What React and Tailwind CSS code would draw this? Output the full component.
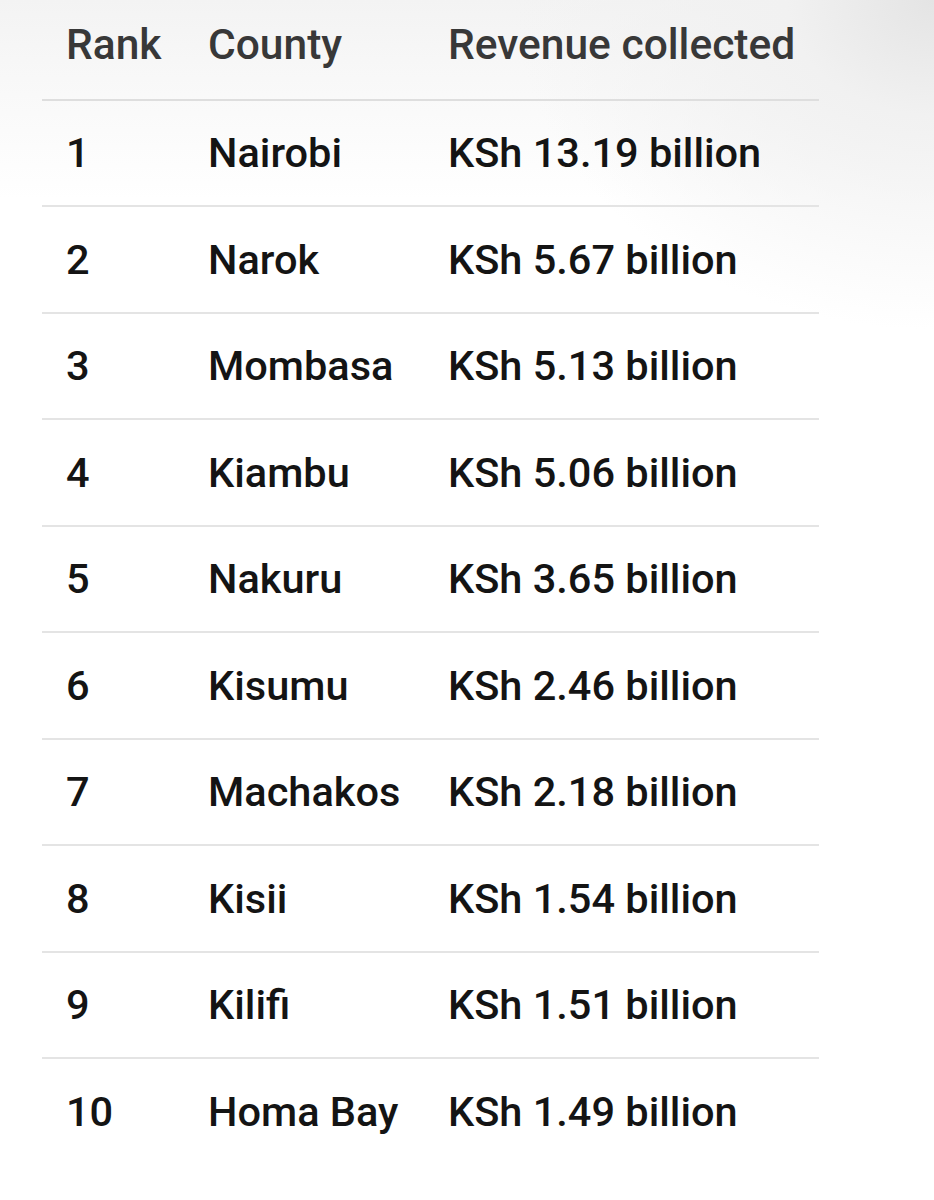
const rows = [
  ["1", "Nairobi", "KSh 13.19 billion"],
  ["2", "Narok", "KSh 5.67 billion"],
  ["3", "Mombasa", "KSh 5.13 billion"],
  ["4", "Kiambu", "KSh 5.06 billion"],
  ["5", "Nakuru", "KSh 3.65 billion"],
  ["6", "Kisumu", "KSh 2.46 billion"],
  ["7", "Machakos", "KSh 2.18 billion"],
  ["8", "Kisii", "KSh 1.54 billion"],
  ["9", "Kilifi", "KSh 1.51 billion"],
  ["10", "Homa Bay", "KSh 1.49 billion"],
];

export default function App() {
  return (
    <div
      className="w-[934px] h-[1200px] overflow-hidden bg-[radial-gradient(ellipse_420px_330px_at_100%_0%,#e4e4e4_0%,#f1f1f1_35%,rgba(255,255,255,0)_100%),linear-gradient(180deg,#f3f3f3_0px,#f7f7f7_60px,#ffffff_200px)]"
      style={{ fontFamily: "Roboto, 'Noto Sans', sans-serif" }}
    >
      <div className="ml-[42px] w-[777px]">
        <div className="flex items-center h-[101px] pb-[8px] border-b-2 border-[#dedede] text-[42.5px] font-medium text-[#383838] leading-none">
          <div className="w-[166px] pl-[24px]">Rank</div>
          <div className="w-[240px]">County</div>
          <div className="flex-1">Revenue collected</div>
        </div>
        {rows.map((r, i) => (
          <div
            key={r[0]}
            className={
              i < rows.length - 1
                ? "flex items-center h-[106.44px] border-b-2 border-[#e4e4e4] text-[41.5px] font-medium text-[#141414] leading-none"
                : "flex items-center h-[106.44px] text-[41.5px] font-medium text-[#141414] leading-none"
            }
          >
            <div className="w-[166px] pl-[24px]">{r[0]}</div>
            <div className="w-[240px]">{r[1]}</div>
            <div className="flex-1">{r[2]}</div>
          </div>
        ))}
      </div>
    </div>
  );
}
